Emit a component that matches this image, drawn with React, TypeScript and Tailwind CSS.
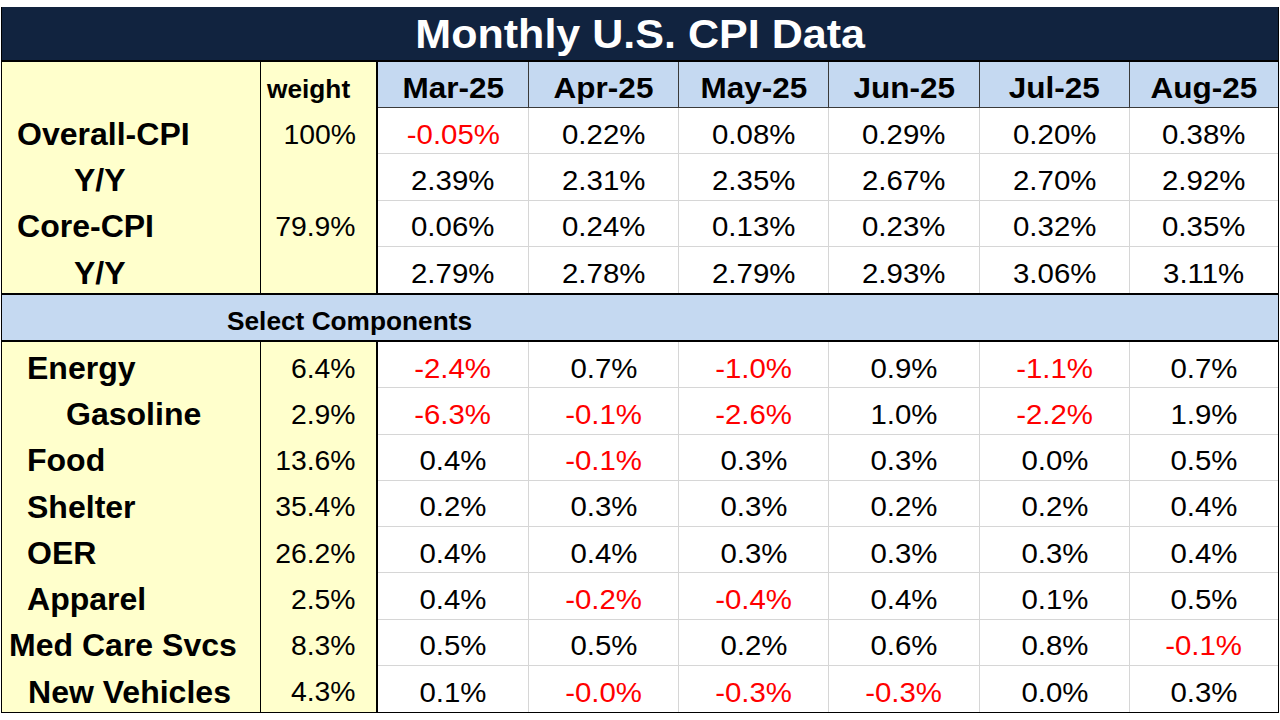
import React from "react"

const months = ["Mar-25", "Apr-25", "May-25", "Jun-25", "Jul-25", "Aug-25"]

const topRows = [
  { label: "Overall-CPI", pad: "pl-[15px]", weight: "100%", vals: ["-0.05%", "0.22%", "0.08%", "0.29%", "0.20%", "0.38%"] },
  { label: "Y/Y", pad: "pl-[72px]", weight: "", vals: ["2.39%", "2.31%", "2.35%", "2.67%", "2.70%", "2.92%"] },
  { label: "Core-CPI", pad: "pl-[15px]", weight: "79.9%", vals: ["0.06%", "0.24%", "0.13%", "0.23%", "0.32%", "0.35%"] },
  { label: "Y/Y", pad: "pl-[72px]", weight: "", vals: ["2.79%", "2.78%", "2.79%", "2.93%", "3.06%", "3.11%"] },
]

const components = [
  { label: "Energy", pad: "pl-[25px]", weight: "6.4%", vals: ["-2.4%", "0.7%", "-1.0%", "0.9%", "-1.1%", "0.7%"] },
  { label: "Gasoline", pad: "pl-[64px]", weight: "2.9%", vals: ["-6.3%", "-0.1%", "-2.6%", "1.0%", "-2.2%", "1.9%"] },
  { label: "Food", pad: "pl-[25px]", weight: "13.6%", vals: ["0.4%", "-0.1%", "0.3%", "0.3%", "0.0%", "0.5%"] },
  { label: "Shelter", pad: "pl-[25px]", weight: "35.4%", vals: ["0.2%", "0.3%", "0.3%", "0.2%", "0.2%", "0.4%"] },
  { label: "OER", pad: "pl-[25px]", weight: "26.2%", vals: ["0.4%", "0.4%", "0.3%", "0.3%", "0.3%", "0.4%"] },
  { label: "Apparel", pad: "pl-[25px]", weight: "2.5%", vals: ["0.4%", "-0.2%", "-0.4%", "0.4%", "0.1%", "0.5%"] },
  { label: "Med Care Svcs", pad: "pl-[7px]", weight: "8.3%", vals: ["0.5%", "0.5%", "0.2%", "0.6%", "0.8%", "-0.1%"] },
  { label: "New Vehicles", pad: "pl-[26px]", weight: "4.3%", vals: ["0.1%", "-0.0%", "-0.3%", "-0.3%", "0.0%", "0.3%"] },
]

// the sheet's Arial is stretched a touch wider than plain Arial
const Wide = ({ children, origin = "origin-center", className = "" }: any) => (
  <span className={`inline-block scale-x-105 leading-none ${origin} ${className}`}>{children}</span>
)

const DataRow = ({ row, last }: any) => (
  <>
    <div className={`flex items-center pt-[6px] bg-[#ffffcc] border-r border-black ${row.pad}`}>
      <Wide origin="origin-left" className="text-[30.5px] font-bold">{row.label}</Wide>
    </div>
    <div className="flex items-center justify-end pt-[8px] pr-[20px] bg-[#ffffcc] border-r-2 border-black">
      <Wide origin="origin-right" className="text-[27px]">{row.weight}</Wide>
    </div>
    {row.vals.map((v: string, i: number) => (
      <div
        key={i}
        className={`flex items-center justify-center pt-[8px] bg-white ${i < 5 ? "border-r border-r-[#d6d6d6]" : ""} ${last ? "" : "border-b border-b-[#d6d6d6]"}`}
      >
        <Wide className={`text-[28px] ${v.startsWith("-") ? "text-[#ff0000]" : "text-black"}`}>{v}</Wide>
      </div>
    ))}
  </>
)

export default function App() {
  return (
    <div className="w-[1280px] h-[720px] bg-white pt-[7px] pl-px font-['Liberation_Sans',Arial,sans-serif] text-black">
      <div className="w-[1278px] border-x border-b border-black">
        <div className="h-[55px] bg-[#11233f] border-b-2 border-black flex items-center justify-center pt-[2px]">
          <Wide className="text-[41px] font-bold text-white">Monthly U.S. CPI Data</Wide>
        </div>
        <div className="grid grid-cols-[259px_117px_151px_150px_150px_151px_150px_148px] grid-rows-[46px_repeat(4,46.25px)]">
          <div className="bg-[#ffffcc] border-r border-black" />
          <div className="flex items-center pl-[6px] pt-[8px] bg-[#ffffcc] border-r-2 border-black">
            <Wide origin="origin-left" className="text-[25px] font-bold">weight</Wide>
          </div>
          {months.map((m, i) => (
            <div
              key={m}
              className={`flex items-center justify-center pt-[6px] bg-[#c5d9f1] border-b border-b-[#3a3a3a] ${i < 5 ? "border-r border-r-[#3a3a3a]" : ""}`}
            >
              <Wide className="text-[30px] font-bold">{m}</Wide>
            </div>
          ))}
          {topRows.map((r, i) => (
            <DataRow key={i} row={r} last={i === topRows.length - 1} />
          ))}
        </div>
        <div className="h-[49px] bg-[#c5d9f1] border-y-2 border-black flex items-center pt-[8px] pl-[225px]">
          <Wide origin="origin-left" className="text-[25px] font-bold">Select Components</Wide>
        </div>
        <div className="grid grid-cols-[259px_117px_151px_150px_150px_151px_150px_148px] grid-rows-[repeat(8,46.25px)]">
          {components.map((r, i) => (
            <DataRow key={i} row={r} last={i === components.length - 1} />
          ))}
        </div>
      </div>
    </div>
  )
}
